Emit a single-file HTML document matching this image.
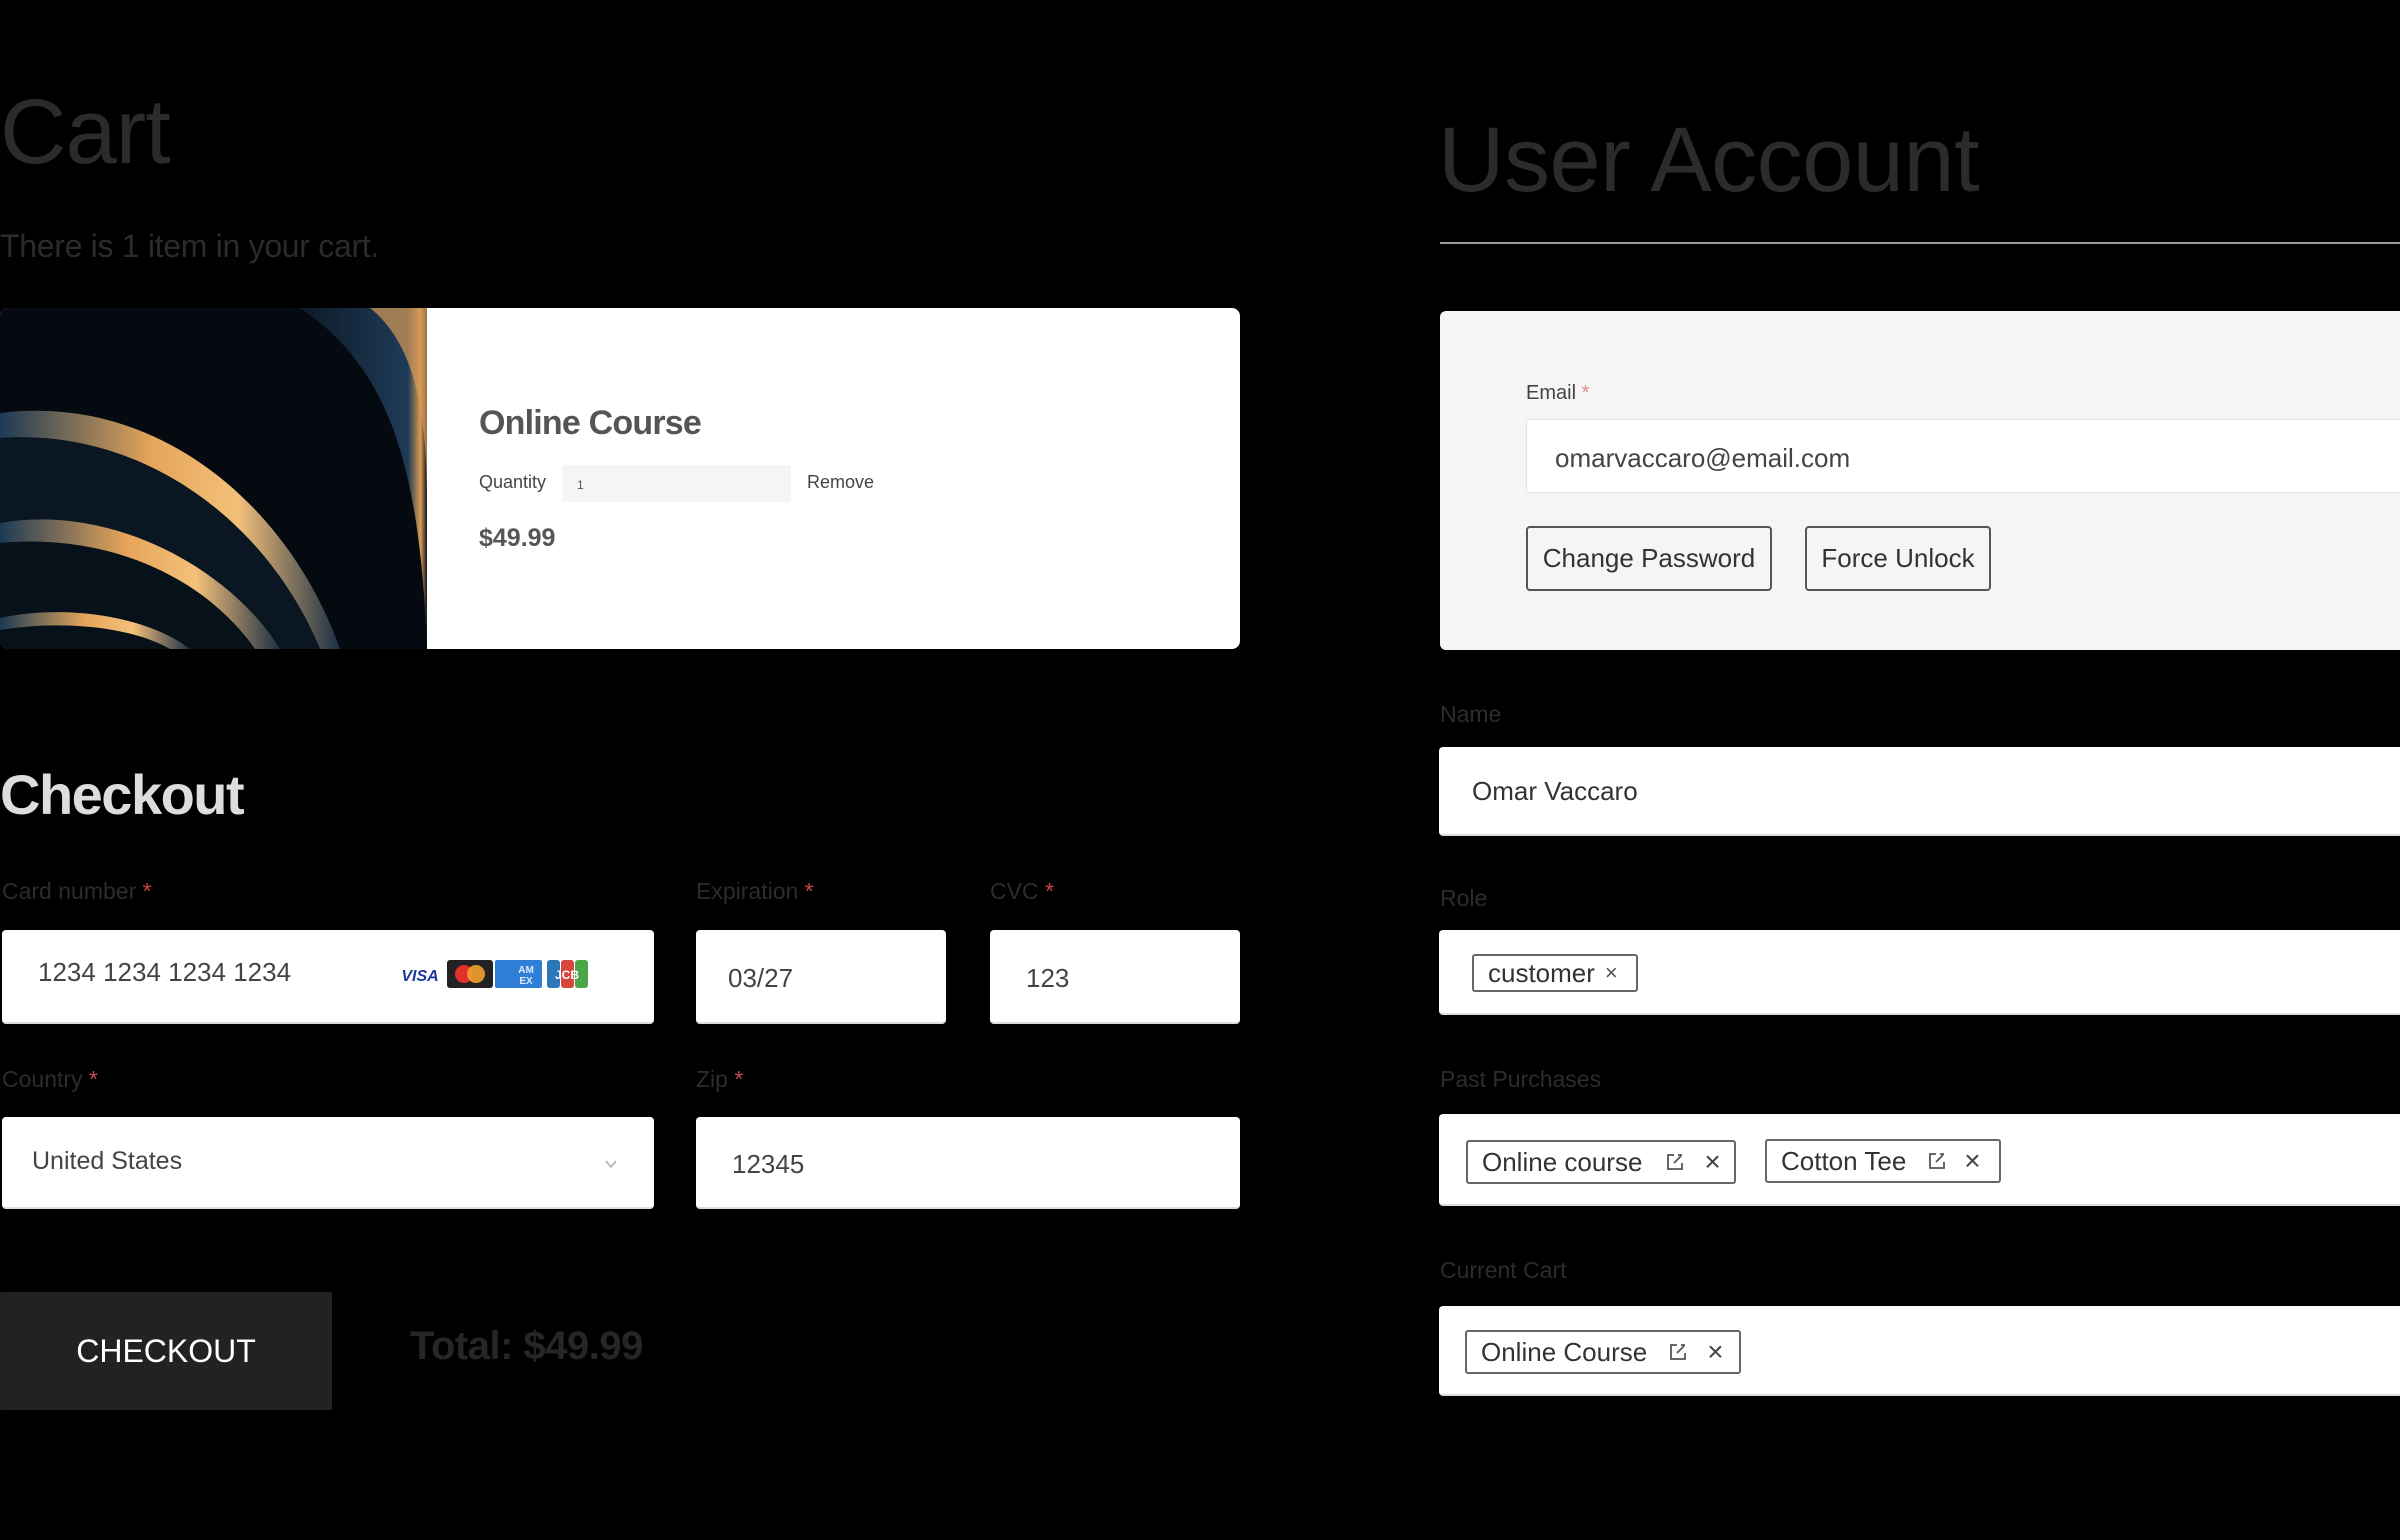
<!DOCTYPE html>
<html><head><meta charset="utf-8">
<style>
*{margin:0;padding:0;box-sizing:border-box}
html,body{width:2400px;height:1540px;background:#000;overflow:hidden;font-family:"Liberation Sans",sans-serif}
.a{position:absolute;white-space:nowrap}
.lbl{font-size:23px;color:#2c2c2c}
.req{color:#c9474a}
.inp{position:absolute;background:#fff;border-radius:4px;border-bottom:2px solid #ddd}
.chip{position:absolute;border:2px solid #666;border-radius:3px;background:#fff;color:#333;font-size:26px;display:flex;align-items:center}
.btn{position:absolute;border:2px solid #555;border-radius:4px;font-size:26px;color:#333;display:flex;align-items:center;justify-content:center}
</style></head><body>

<!-- LEFT -->
<div class="a" style="left:0;top:80px;font-size:92px;color:#2b2b2b;letter-spacing:-1px">Cart</div>
<div class="a" style="left:0;top:228px;font-size:32px;color:#2b2b2b;letter-spacing:-0.3px">There is 1 item in your cart.</div>

<div class="a" style="left:0;top:308px;width:1240px;height:341px;background:#fff;border-radius:8px;overflow:hidden">
 <svg width="427" height="341" viewBox="0 0 427 341" style="position:absolute;left:0;top:0">
  <defs>
   <linearGradient id="g1" x1="0" y1="0" x2="1" y2="0">
    <stop offset="0" stop-color="#1c3a55"/><stop offset="0.45" stop-color="#e6a55a"/><stop offset="0.7" stop-color="#f3c07a"/><stop offset="1" stop-color="#1b2f44"/>
   </linearGradient>
   <linearGradient id="g2" x1="0" y1="0" x2="1" y2="0">
    <stop offset="0" stop-color="#0c1a28"/><stop offset="0.85" stop-color="#1f3b57"/><stop offset="0.95" stop-color="#d99a52"/><stop offset="1" stop-color="#0b1520"/>
   </linearGradient>
  </defs>
  <rect width="427" height="341" fill="#040a10"/>
  <path d="M300 0 C390 60 420 160 427 341 L427 0 Z" fill="url(#g2)"/>
  <path d="M370 0 C420 40 427 120 427 200 L427 0Z" fill="#d89a55" opacity="0.7"/>
  <path d="M0 105 C160 85 290 200 340 341 L320 341 C270 220 150 120 0 130 Z" fill="url(#g1)"/>
  <path d="M0 130 C150 120 270 220 320 341 L0 341Z" fill="#0a1622"/>
  <path d="M0 215 C110 195 230 260 280 341 L255 341 C205 270 110 225 0 235 Z" fill="url(#g1)"/>
  <path d="M0 235 C110 225 205 270 255 341 L0 341Z" fill="#07111a"/>
  <path d="M0 310 C70 295 150 310 190 341 L170 341 C130 318 60 312 0 322 Z" fill="url(#g1)"/>
 </svg>
 <div class="a" style="left:479px;top:96px;font-size:34px;font-weight:bold;color:#555;letter-spacing:-0.8px">Online Course</div>
 <div class="a" style="left:479px;top:164px;font-size:18px;color:#444">Quantity</div>
 <div class="a" style="left:562px;top:157px;width:229px;height:37px;background:#f5f5f5"></div>
 <div class="a" style="left:577px;top:170px;font-size:12px;color:#555">1</div>
 <div class="a" style="left:807px;top:164px;font-size:18px;color:#444">Remove</div>
 <div class="a" style="left:479px;top:216px;font-size:25px;font-weight:bold;color:#555">$49.99</div>
</div>

<div class="a" style="left:0;top:762px;font-size:56px;font-weight:bold;color:#ddd;letter-spacing:-1.5px">Checkout</div>

<div class="a lbl" style="left:2px;top:878px">Card number <span class="req">*</span></div>
<div class="a lbl" style="left:696px;top:878px">Expiration <span class="req">*</span></div>
<div class="a lbl" style="left:990px;top:878px">CVC <span class="req">*</span></div>

<div class="inp" style="left:2px;top:930px;width:652px;height:94px"></div>
<div class="a" style="left:38px;top:957px;font-size:26px;color:#444">1234 1234 1234 1234</div>
<svg class="a" style="left:398px;top:960px" width="192" height="28" viewBox="0 0 192 28">
 <rect x="0" y="1" width="44" height="26" rx="2" fill="#fff"/>
 <text x="22" y="21" font-family="Liberation Sans" font-weight="bold" font-style="italic" font-size="16" fill="#1a3a9c" text-anchor="middle">VISA</text>
 <rect x="49" y="0" width="46" height="28" rx="3" fill="#222"/>
 <circle cx="66" cy="14" r="9" fill="#e0322a"/><circle cx="78" cy="14" r="9" fill="#f1a12c" opacity="0.9"/>
 <rect x="97" y="0" width="47" height="28" rx="2" fill="#2f7fd6"/>
 <text x="128" y="13" font-family="Liberation Sans" font-size="10" font-weight="bold" fill="#dfeaf8" text-anchor="middle">AM</text>
 <text x="128" y="24" font-family="Liberation Sans" font-size="10" font-weight="bold" fill="#dfeaf8" text-anchor="middle">EX</text>
 <rect x="149" y="0" width="13" height="28" rx="3" fill="#2c77b8"/>
 <rect x="163" y="0" width="13" height="28" rx="3" fill="#d6463b"/>
 <rect x="177" y="0" width="13" height="28" rx="3" fill="#4aa648"/>
 <text x="169" y="19" font-family="Liberation Sans" font-size="12" font-weight="bold" fill="#fff" text-anchor="middle">JCB</text>
</svg>

<div class="inp" style="left:696px;top:930px;width:250px;height:94px"></div>
<div class="a" style="left:728px;top:963px;font-size:26px;color:#444">03/27</div>
<div class="inp" style="left:990px;top:930px;width:250px;height:94px"></div>
<div class="a" style="left:1026px;top:963px;font-size:26px;color:#444">123</div>

<div class="a lbl" style="left:2px;top:1066px">Country <span class="req">*</span></div>
<div class="a lbl" style="left:696px;top:1066px">Zip <span class="req">*</span></div>
<div class="inp" style="left:2px;top:1117px;width:652px;height:92px"></div>
<div class="a" style="left:32px;top:1147px;font-size:25px;color:#444">United States</div>
<svg class="a" style="left:603px;top:1158px" width="16" height="12" viewBox="0 0 16 12"><path d="M3 3 L8 9 L13 3" fill="none" stroke="#bbb" stroke-width="2"/></svg>
<div class="inp" style="left:696px;top:1117px;width:544px;height:92px"></div>
<div class="a" style="left:732px;top:1149px;font-size:26px;color:#444">12345</div>

<div class="a" style="left:0;top:1292px;width:332px;height:118px;background:#222;border-radius:2px;display:flex;align-items:center;justify-content:center;color:#fff;font-size:32px">CHECKOUT</div>
<div class="a" style="left:410px;top:1324px;font-size:40px;font-weight:bold;color:#262626;letter-spacing:-0.5px">Total: $49.99</div>

<!-- RIGHT -->
<div class="a" style="left:1438px;top:108px;font-size:92px;color:#2b2b2b;letter-spacing:-0.5px">User Account</div>
<div class="a" style="left:1440px;top:242px;width:960px;height:2px;background:#999"></div>

<div class="a" style="left:1440px;top:311px;width:970px;height:339px;background:#f5f5f5;border-radius:6px"></div>
<div class="a" style="left:1526px;top:382px;font-size:20px;color:#444">Email <span style="color:#e08a8a">*</span></div>
<div class="a" style="left:1526px;top:419px;width:880px;height:74px;background:#fff;border:1px solid #e2e2e2;border-radius:3px"></div>
<div class="a" style="left:1555px;top:443px;font-size:26px;color:#444">omarvaccaro@email.com</div>
<div class="btn" style="left:1526px;top:526px;width:246px;height:65px">Change Password</div>
<div class="btn" style="left:1805px;top:526px;width:186px;height:65px">Force Unlock</div>

<div class="a lbl" style="left:1440px;top:701px">Name</div>
<div class="inp" style="left:1439px;top:747px;width:970px;height:89px"></div>
<div class="a" style="left:1472px;top:776px;font-size:26px;color:#333">Omar Vaccaro</div>

<div class="a lbl" style="left:1440px;top:885px">Role</div>
<div class="inp" style="left:1439px;top:930px;width:970px;height:85px"></div>
<div class="chip" style="left:1472px;top:954px;width:166px;height:38px;padding-left:14px">customer<span style="font-size:22px;margin-left:10px;color:#555">×</span></div>

<div class="a lbl" style="left:1440px;top:1066px">Past Purchases</div>
<div class="inp" style="left:1439px;top:1114px;width:970px;height:92px"></div>
<div class="chip" style="left:1466px;top:1140px;width:270px;height:44px;padding-left:14px">Online course
 <svg style="margin-left:24px" width="18" height="18" viewBox="0 0 18 18"><path d="M8 2 H2 V16 H16 V10 M8 10 L15 3 M12 2 L16 2" fill="none" stroke="#555" stroke-width="1.8"/></svg>
 <span style="font-size:28px;margin-left:20px;color:#444">×</span></div>
<div class="chip" style="left:1765px;top:1139px;width:236px;height:44px;padding-left:14px">Cotton Tee
 <svg style="margin-left:22px" width="18" height="18" viewBox="0 0 18 18"><path d="M8 2 H2 V16 H16 V10 M8 10 L15 3 M12 2 L16 2" fill="none" stroke="#555" stroke-width="1.8"/></svg>
 <span style="font-size:28px;margin-left:18px;color:#444">×</span></div>

<div class="a lbl" style="left:1440px;top:1257px">Current Cart</div>
<div class="inp" style="left:1439px;top:1306px;width:970px;height:90px"></div>
<div class="chip" style="left:1465px;top:1330px;width:276px;height:44px;padding-left:14px">Online Course
 <svg style="margin-left:22px" width="18" height="18" viewBox="0 0 18 18"><path d="M8 2 H2 V16 H16 V10 M8 10 L15 3 M12 2 L16 2" fill="none" stroke="#555" stroke-width="1.8"/></svg>
 <span style="font-size:28px;margin-left:20px;color:#444">×</span></div>

</body></html>
